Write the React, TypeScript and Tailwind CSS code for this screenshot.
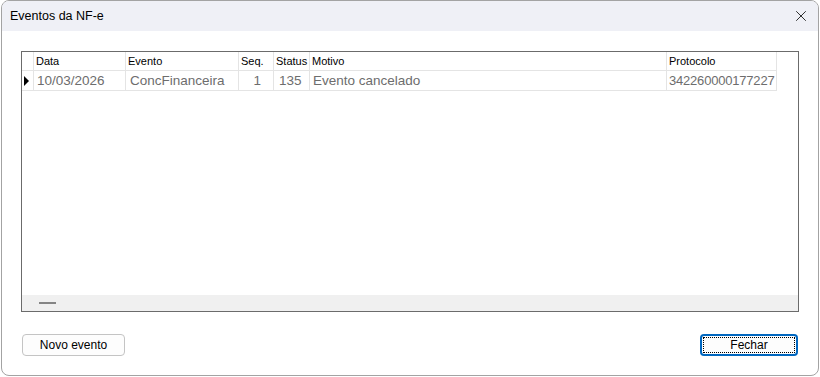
import { X } from "lucide-react"

const cols = [
  { key: "data", label: "Data", w: "w-[92px]", cell: "text-left pl-[3px] text-[13.5px]" },
  { key: "evento", label: "Evento", w: "w-[113px]", cell: "text-left pl-[4px] text-[13.5px]" },
  { key: "seq", label: "Seq.", w: "w-[35px]", cell: "text-right pr-[12px] text-[13.5px]" },
  { key: "status", label: "Status", w: "w-[36px]", cell: "text-left pl-[5px] text-[13.5px]" },
  { key: "motivo", label: "Motivo", w: "w-[357px]", cell: "text-left pl-[3px] text-[13.5px]" },
  { key: "protocolo", label: "Protocolo", w: "w-[110px]", cell: "text-left pl-[2px] text-[13px] tracking-[-0.2px]" },
]

const rows = [
  {
    data: "10/03/2026",
    evento: "ConcFinanceira",
    seq: "1",
    status: "135",
    motivo: "Evento cancelado",
    protocolo: "342260000177227",
  },
]

export default function App() {
  return (
    <div className="w-[820px] h-[377px] bg-white pl-px font-['Liberation_Sans',Arial,sans-serif]">
      <div className="w-[818px] h-[376px] border border-[#a3a3a3] rounded-lg overflow-hidden flex flex-col bg-white">
        {/* Title bar */}
        <div className="h-[30px] shrink-0 bg-[#eff0f6] flex items-center justify-between pl-[8px] pr-[8px]">
          <span className="text-[12.5px] text-black">Eventos da NF-e</span>
          <X className="w-[18px] h-[18px] text-[#1a1a1a]" strokeWidth={1.2} />
        </div>

        <div className="flex-1 flex flex-col px-[19px] pt-[20px]">
          {/* Grid */}
          <div className="w-[778px] h-[261px] border border-[#6b6b6b] flex flex-col bg-white">
            <div className="flex-1">
              {/* Header */}
              <div className="flex w-fit h-[19px] border-b border-[#e4e4e4]">
                <div className="w-[12px] border-r border-[#e4e4e4]" />
                {cols.map((c) => (
                  <div
                    key={c.key}
                    className={`${c.w} border-r border-[#e4e4e4] pl-[2px] text-[11px] leading-[18px] text-black whitespace-nowrap overflow-hidden`}
                  >
                    {c.label}
                  </div>
                ))}
              </div>
              {/* Rows */}
              {rows.map((r, i) => (
                <div key={i} className="flex w-fit h-[20px] border-b border-[#e4e4e4]">
                  <div className="w-[12px] border-r border-[#e4e4e4] flex items-center pl-[2px]">
                    <div className="w-0 h-0 border-y-[5px] border-y-transparent border-l-[5px] border-l-black" />
                  </div>
                  {cols.map((c) => (
                    <div
                      key={c.key}
                      className={`${c.w} ${c.cell} border-r border-[#e4e4e4] leading-[19px] text-[#6d6d6d] whitespace-nowrap overflow-hidden`}
                    >
                      {r[c.key as keyof typeof r]}
                    </div>
                  ))}
                </div>
              ))}
            </div>
            {/* Horizontal scrollbar */}
            <div className="h-[16px] bg-[#f0f0f0] flex items-center pl-[17px]">
              <div className="w-[17px] h-[2px] bg-[#858585]" />
            </div>
          </div>

          {/* Buttons */}
          <div className="flex justify-between mt-[22px] pl-px pr-px">
            <button className="w-[103px] h-[22px] rounded-[4px] border border-[#c4c4c4] bg-[#fdfdfd] text-[12px] text-black">
              Novo evento
            </button>
            <button className="w-[98px] h-[22px] rounded-[4px] border-2 border-[#0067c0] bg-[#fdfdfd] p-px">
              <div className="w-full h-full border border-dotted border-black flex items-center justify-center text-[12px] text-black">
                Fechar
              </div>
            </button>
          </div>
        </div>
      </div>
    </div>
  )
}
